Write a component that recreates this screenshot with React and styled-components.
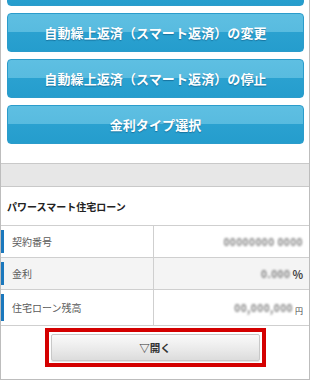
import React from "react";
import styled, { createGlobalStyle } from "styled-components";

const Global = createGlobalStyle`
  html, body { margin: 0; padding: 0; background: #fff; }
  body { font-family: "Noto Sans CJK JP", "Noto Sans", sans-serif; }
`;

const Page = styled.div`
  width: 310px;
  height: 380px;
  box-sizing: border-box;
  border-left: 1px solid #bdbdbd;
  border-right: 1px solid #bdbdbd;
  border-bottom: 1px solid #bdbdbd;
  overflow: hidden;
  display: flex;
  flex-direction: column;
`;

const ButtonList = styled.div`
  display: flex;
  flex-direction: column;
  gap: 7px;
  margin-top: -33px;
  padding: 0 5px 19px 6px;
`;

const BlueButton = styled.div`
  height: 39px;
  box-sizing: border-box;
  border-radius: 4px;
  border: 1px solid #2b9ccb;
  background: linear-gradient(#5ebfe2 0%, #58bbdf 50%, #2aa1d0 50%, #259dcd 100%);
  display: flex;
  align-items: center;
  justify-content: center;
  color: #fff;
  font-weight: 700;
  font-size: 13px;
  letter-spacing: 0.1px;
  text-shadow: 0 1px 1px rgba(0, 60, 100, 0.45);
`;

const Band = styled.div`
  height: 22px;
  background: #e7e7e7;
  border-top: 1px solid #c9c9c9;
  border-bottom: 1px solid #c9c9c9;
`;

const Title = styled.div`
  height: 38px;
  display: flex;
  align-items: center;
  padding-left: 6px;
  font-size: 10px;
  font-weight: 700;
  color: #222;
`;

const Table = styled.div`
  display: flex;
  flex-direction: column;
  border-top: 1px solid #cfcfcf;
`;

const Row = styled.div`
  display: grid;
  grid-template-columns: 153px 1fr;
  height: ${(p) => p.$h}px;
  background: ${(p) => (p.$shade ? "#f4f4f4" : "#fff")};
  border-bottom: 1px solid #cfcfcf;
`;

const Label = styled.div`
  position: relative;
  display: flex;
  align-items: center;
  padding-left: 11px;
  font-size: 10px;
  color: #5a5a5a;
  border-right: 1px solid #cfcfcf;
  &::before {
    content: "";
    position: absolute;
    left: 0;
    top: 4px;
    bottom: 4px;
    width: 3px;
    background: #1b78bd;
  }
`;

const Value = styled.div`
  display: flex;
  align-items: center;
  justify-content: flex-end;
  padding-right: 6px;
  gap: 2px;
`;

const Masked = styled.span`
  font-size: 10px;
  font-weight: 700;
  color: #7d7d7d;
  filter: blur(1.1px);
  letter-spacing: 0.5px;
`;

const Unit = styled.span`
  font-size: ${(p) => p.$size}px;
  color: #444;
  font-weight: ${(p) => (p.$bold ? 700 : 400)};
  align-self: ${(p) => (p.$low ? "flex-end" : "center")};
  margin-bottom: ${(p) => (p.$low ? "9px" : "0")};
`;

const OpenArea = styled.div`
  display: flex;
  justify-content: center;
  padding-top: 2px;
`;

const Highlight = styled.div`
  width: 221px;
  height: 39px;
  box-sizing: border-box;
  border: 4px solid #d40000;
  padding: 2px;
  display: flex;
`;

const OpenButton = styled.div`
  flex: 1;
  box-sizing: border-box;
  border: 1px solid #c8c8c8;
  border-radius: 2px;
  background: linear-gradient(#fafafa, #e9e9e9 60%, #dcdcdc);
  box-shadow: 0 1px 1px rgba(0, 0, 0, 0.12);
  display: flex;
  align-items: center;
  justify-content: center;
  font-size: 10.5px;
  font-weight: 700;
  color: #333;
`;

export default function App() {
  return (
    <>
      <Global />
      <Page>
        <ButtonList>
          <BlueButton />
          <BlueButton>自動繰上返済（スマート返済）の変更</BlueButton>
          <BlueButton>自動繰上返済（スマート返済）の停止</BlueButton>
          <BlueButton>金利タイプ選択</BlueButton>
        </ButtonList>
        <Band />
        <Title>パワースマート住宅ローン</Title>
        <Table>
          <Row $h={31}>
            <Label>契約番号</Label>
            <Value>
              <Masked>00000000 0000</Masked>
            </Value>
          </Row>
          <Row $h={31} $shade>
            <Label>金利</Label>
            <Value>
              <Masked>0.000</Masked>
              <Unit $size={11} $bold>%</Unit>
            </Value>
          </Row>
          <Row $h={35}>
            <Label>住宅ローン残高</Label>
            <Value>
              <Masked>00,000,000</Masked>
              <Unit $size={8} $low>円</Unit>
            </Value>
          </Row>
        </Table>
        <OpenArea>
          <Highlight>
            <OpenButton>▽開く</OpenButton>
          </Highlight>
        </OpenArea>
      </Page>
    </>
  );
}
